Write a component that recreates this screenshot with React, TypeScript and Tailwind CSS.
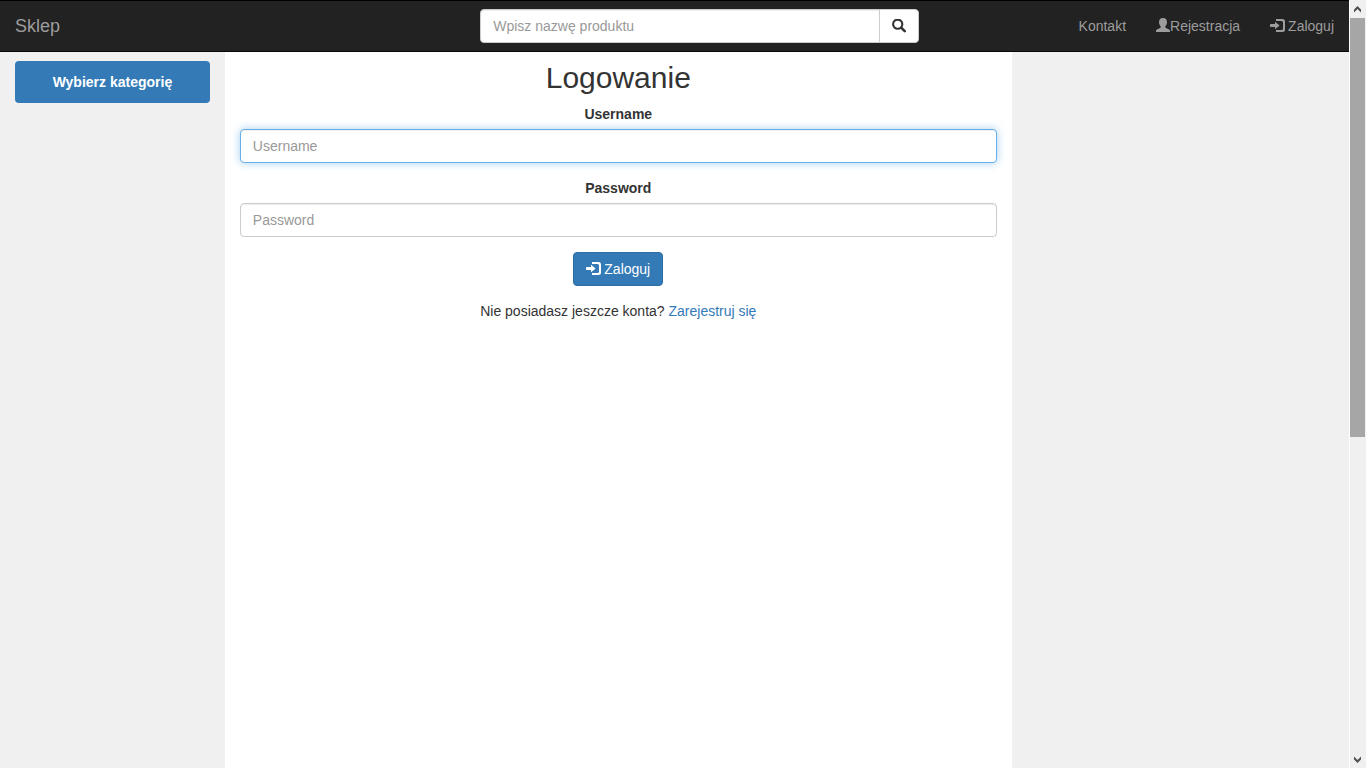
import React from "react";

function LogInIcon() {
  return (
    <svg viewBox="0 0 14 14" className="size-3.5 shrink-0 overflow-visible" fill="currentColor" aria-hidden="true">
      <path d="M6 0h6.500Q15 0 15 2.500v8q0 2.500-2.500 2.500H6v-2h5.500q1.500 0 1.500-1.500v-6Q13 2 11.500 2H6z" />
      <path d="M5 2.800 9.600 6.500 5 10.200V8H.8Q0 8 0 7.200V5.800Q0 5 .8 5H5z" />
    </svg>
  );
}

function UserIcon() {
  return (
    <svg viewBox="0 0 14 14" className="size-3.5 shrink-0 overflow-visible" fill="currentColor" aria-hidden="true">
      <path d="M7-1c2.600 0 4 1.600 4 4.200 0 1.700-.7 3.200-1.700 4.200v.6c0 .4.200.7.600.9l2.700 1.300c.9.400 1.400 1 1.400 1.800v1H0v-1c0-.8.500-1.400 1.400-1.800l2.700-1.300c.4-.2.600-.5.600-.9v-.6C3.700 6.400 3 4.900 3 3.200 3 .6 4.400-1 7-1z" />
    </svg>
  );
}

function SearchIcon() {
  return (
    <svg viewBox="0 0 14 14" className="size-3.5" fill="none" stroke="currentColor" aria-hidden="true">
      <circle cx="5.700" cy="5.200" r="4.600" strokeWidth="2.100" />
      <path d="m9.200 8.700 3.500 3.500" strokeWidth="2.600" strokeLinecap="round" />
    </svg>
  );
}

function Navbar() {
  const link = "flex items-center px-[15px] py-[15px] text-[#9d9d9d] hover:text-white";
  return (
    <nav className="flex h-[52px] border-y border-[#080808] border-t-black bg-[#222]">
      <div className="flex w-[35.6%] shrink-0">
        <a href="#" className="flex items-center px-[15px] text-lg text-[#9d9d9d] hover:text-white">Sklep</a>
      </div>
      <form role="search" className="flex w-[439px] items-center" onSubmit={(e) => e.preventDefault()}>
        <input
          type="text"
          aria-label="Wpisz nazwę produktu"
          placeholder="Wpisz nazwę produktu"
          className="h-[34px] min-w-0 grow rounded-l-[4px] border border-[#ccc] bg-white px-3 text-[#555] shadow-[inset_0_1px_1px_rgba(0,0,0,0.075)] outline-none placeholder:text-[#999]"
        />
        <button type="submit" aria-label="Szukaj" className="-ml-px flex h-[34px] w-10 items-center justify-center rounded-r-[4px] border border-[#ccc] bg-white text-[#333]">
          <SearchIcon />
        </button>
      </form>
      <div className="ml-auto flex">
        <a href="#" className={link}>Kontakt</a>
        <a href="#" className={link}><UserIcon />Rejestracja</a>
        <a href="#" className={`${link} gap-1`}><LogInIcon />Zaloguj</a>
      </div>
    </nav>
  );
}

const field =
  "h-[34px] w-full rounded-[4px] border border-[#ccc] bg-white px-3 text-[#555] shadow-[inset_0_1px_1px_rgba(0,0,0,0.075)] outline-none placeholder:text-[#999] focus:border-[#66afe9] focus:shadow-[inset_0_1px_1px_rgba(0,0,0,0.075),0_0_8px_rgba(102,175,233,0.6)]";

function LoginForm() {
  return (
    <form className="flex flex-col items-center" onSubmit={(e) => e.preventDefault()}>
      <h2 className="mb-2.5 text-[30px] leading-[33px]">Logowanie</h2>
      <label htmlFor="username" className="mb-[5px] font-bold">Username</label>
      <input id="username" type="text" placeholder="Username" autoFocus className={`${field} mb-[15px]`} />
      <label htmlFor="password" className="mb-[5px] font-bold">Password</label>
      <input id="password" type="password" placeholder="Password" className={`${field} mb-[15px]`} />
      <button type="submit" className="mb-[15px] flex h-[34px] items-center gap-1 rounded-[4px] border border-[#2e6da4] bg-[#337ab7] px-3 text-white">
        <LogInIcon />Zaloguj
      </button>
      <p>
        Nie posiadasz jeszcze konta? <a href="#" className="text-[#337ab7] hover:underline">Zarejestruj się</a>
      </p>
    </form>
  );
}

function Chevron({ down = false }: { down?: boolean }) {
  return (
    <svg viewBox="0 0 16 17" className="h-[17px] w-4 shrink-0" fill="#505050" aria-hidden="true">
      {down ? <path d="M4 5.500v3L7.500 12 11 8.500v-3L7.500 9z" /> : <path d="M4 12.500v-3L7.500 6 11 9.500v3L7.500 9z" />}
    </svg>
  );
}

function ScrollBar() {
  return (
    <div className="sticky top-0 flex h-screen w-[17px] shrink-0 flex-col border-l border-white bg-[#f0f0f0]" aria-hidden="true">
      <Chevron />
      <div className="min-h-0 grow pr-px pt-px">
        <div className="h-[57.2%] bg-[#a6a6a6]" />
      </div>
      <Chevron down />
    </div>
  );
}

export default function App() {
  return (
    <div className="flex min-h-screen bg-[#f0f0f0] font-['Liberation_Sans',Arial,sans-serif] text-sm leading-5 text-[#333]">
      <div className="flex min-w-0 grow flex-col">
        <Navbar />
        <div className="grid grow grid-cols-12">
          <aside className="col-span-2 px-[15px] pt-[9px]">
            <button type="button" className="h-[42px] w-full rounded-[4px] bg-[#337ab7] font-bold text-white">Wybierz kategorię</button>
          </aside>
          <main className="col-span-7 bg-white px-[15px] pt-[9px]">
            <LoginForm />
          </main>
        </div>
      </div>
      <ScrollBar />
    </div>
  );
}
